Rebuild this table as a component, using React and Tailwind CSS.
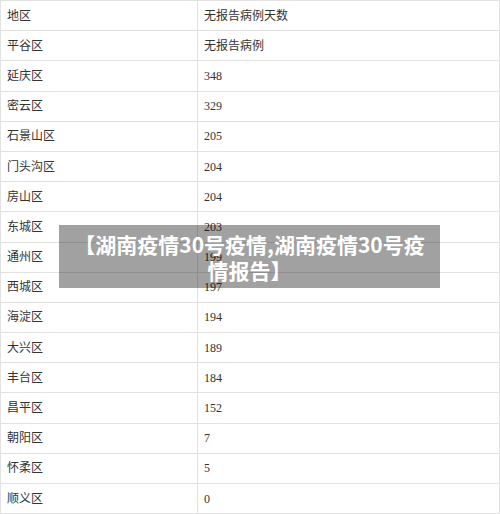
import React from "react";

const rows = [
  ["地区", "无报告病例天数"],
  ["平谷区", "无报告病例"],
  ["延庆区", "348"],
  ["密云区", "329"],
  ["石景山区", "205"],
  ["门头沟区", "204"],
  ["房山区", "204"],
  ["东城区", "203"],
  ["通州区", "199"],
  ["西城区", "197"],
  ["海淀区", "194"],
  ["大兴区", "189"],
  ["丰台区", "184"],
  ["昌平区", "152"],
  ["朝阳区", "7"],
  ["怀柔区", "5"],
  ["顺义区", "0"],
];

export default function App() {
  return (
    <div className="relative w-[500px] h-[514px] overflow-hidden bg-white">
      <div
        className="w-[500px] border-t border-l border-r border-[#e2e2e2] text-[12px] text-[#333]"
        style={{ fontFamily: '"Liberation Serif", "Noto Sans CJK SC", serif' }}
      >
        {rows.map(([area, days], i) => (
          <div key={i} className="grid grid-cols-[197px_1fr] h-[30.2px] border-b border-[#e2e2e2]">
            <div className="flex items-center pl-[6px] border-r border-[#e2e2e2]">{area}</div>
            <div className="flex items-center pl-[6px]">{days}</div>
          </div>
        ))}
      </div>

      <div
        className="absolute left-[59px] top-[225px] w-[381px] h-[63px] bg-[rgba(0,0,0,0.37)] flex items-center justify-center px-[13px] text-center text-white font-bold text-[21px] leading-[26px]"
        style={{ fontFamily: '"Noto Sans CJK SC", "Noto Sans", sans-serif' }}
      >
        【湖南疫情30号疫情,湖南疫情30号疫情报告】
      </div>
    </div>
  );
}
